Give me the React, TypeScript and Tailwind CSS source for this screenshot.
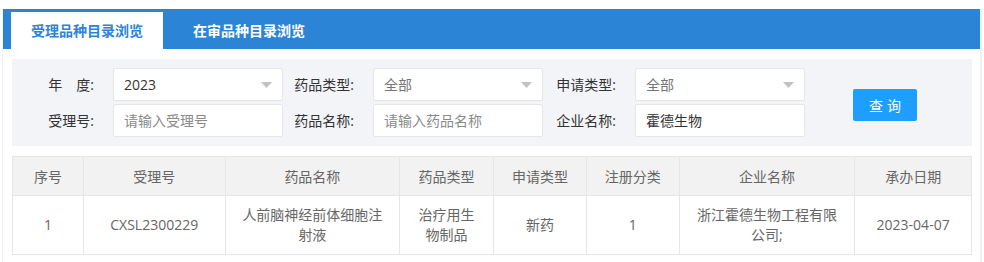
import React from 'react';

const font = "font-['Open_Sans','Noto_Sans_CJK_SC',sans-serif]";

const Arrow = () => (
  <svg width="11" height="6" viewBox="0 0 11 6" className="shrink-0">
    <path d="M0 0 L11 0 L5.5 6 Z" fill="#c2c2c2" />
  </svg>
);

const Label: React.FC<{ text: string; w?: string }> = ({ text, w = 'w-[90px]' }) => (
  <div className={`${w} pr-[19px] text-right text-[14px] text-[#333]`}>{text}</div>
);

const SelectBox: React.FC<{ value: string; muted?: boolean }> = ({ value, muted }) => (
  <div className="flex h-[33px] w-[170px] items-center justify-between rounded-[2px] border border-[#e6e6e6] bg-white pl-[10px] pr-[10px]">
    <span className={muted ? 'text-[14px] text-[#757575]' : 'text-[14px] text-[#333]'}>{value}</span>
    <Arrow />
  </div>
);

const InputBox: React.FC<{ value?: string; placeholder?: string }> = ({ value, placeholder }) => (
  <div className="flex h-[33px] w-[170px] items-center rounded-[2px] border border-[#e6e6e6] bg-white pl-[10px]">
    {value ? (
      <span className="text-[14px] text-[#333]">{value}</span>
    ) : (
      <span className="text-[14px] text-[#8a8a8a]">{placeholder}</span>
    )}
  </div>
);

const columns = [
  { title: '序号', w: 'w-[70px]' },
  { title: '受理号', w: 'w-[142px]' },
  { title: '药品名称', w: 'w-[175px]' },
  { title: '药品类型', w: 'w-[94px]' },
  { title: '申请类型', w: 'w-[93px]' },
  { title: '注册分类', w: 'w-[93px]' },
  { title: '企业名称', w: 'w-[176px]' },
  { title: '承办日期', w: 'w-[117px]' },
];

const row = ['1', 'CXSL2300229', '人前脑神经前体细胞注射液', '治疗用生物制品', '新药', '1', '浙江霍德生物工程有限公司;', '2023-04-07'];

export default function App() {
  return (
    <div className={`h-[262px] w-[984px] bg-white pt-[9px] ${font}`}>
      <div className="mx-[2px] h-[253px] border-l border-r-2 border-[#eef1f6]">
        {/* tabs */}
        <div className="flex h-[40px] items-end bg-[#2b84d6] pl-[8px]">
          <div className="flex h-[37px] w-[152px] items-center justify-center bg-white text-[14px] font-semibold text-[#2b84d6]">
            受理品种目录浏览
          </div>
          <div className="ml-[10px] flex h-[37px] items-center px-[20px] text-[14px] font-semibold text-white">
            在审品种目录浏览
          </div>
        </div>

        <div className="pl-[9px] pr-[8px] pt-[10px]">
          {/* search panel */}
          <div className="flex h-[87px] items-center bg-[#f3f4f8] pl-[11px]">
            <div className="flex flex-col gap-[3px]">
              <div className="flex items-center">
                <Label text="年　度:" />
                <SelectBox value="2023" />
                <Label text="药品类型:" />
                <SelectBox value="全部" muted />
                <Label text="申请类型:" w="w-[92px]" />
                <SelectBox value="全部" muted />
              </div>
              <div className="flex items-center">
                <Label text="受理号:" />
                <InputBox placeholder="请输入受理号" />
                <Label text="药品名称:" />
                <InputBox placeholder="请输入药品名称" />
                <Label text="企业名称:" w="w-[92px]" />
                <InputBox value="霍德生物" />
              </div>
            </div>
            <button className="ml-[48px] mt-[5px] flex h-[32px] w-[64px] items-center justify-center rounded-[2px] bg-[#1e9fff] pl-[4px] text-[14px] tracking-[4px] text-white">
              查询
            </button>
          </div>

          {/* table */}
          <div className="mt-[10px] w-[960px] border border-[#e6e6e6]">
            <div className="flex h-[38px] bg-[#f2f2f2]">
              {columns.map((c, i) => (
                <div
                  key={c.title}
                  className={`${c.w} flex items-center justify-center text-[14px] text-[#666] ${i > 0 ? 'border-l border-[#e6e6e6]' : ''}`}
                >
                  {c.title}
                </div>
              ))}
            </div>
            <div className="flex h-[59px] border-t border-[#e6e6e6]">
              {columns.map((c, i) => (
                <div
                  key={c.title}
                  className={`${c.w} flex items-center justify-center px-[15px] text-center text-[14px] leading-[20px] text-[#666] ${i > 0 ? 'border-l border-[#e6e6e6]' : ''}`}
                >
                  {row[i]}
                </div>
              ))}
            </div>
          </div>
        </div>
      </div>
    </div>
  );
}
